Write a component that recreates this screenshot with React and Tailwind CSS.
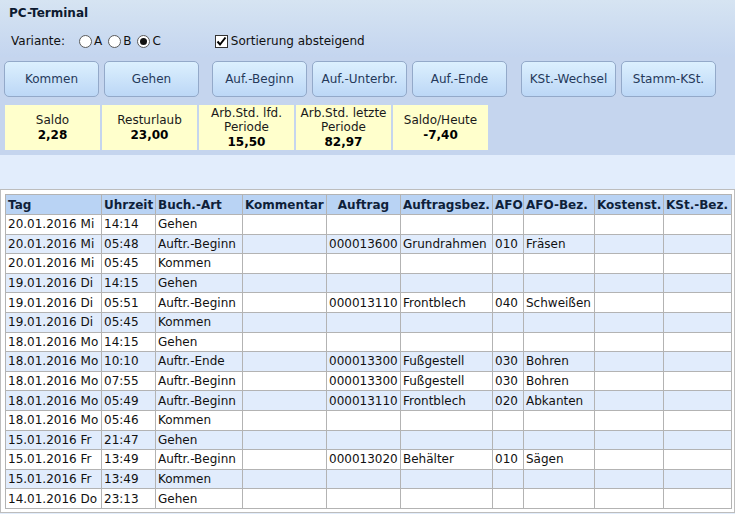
import React, { useState } from "react";

const rows = [
  ["20.01.2016 Mi", "14:14", "Gehen", "", "", "", "", ""],
  ["20.01.2016 Mi", "05:48", "Auftr.-Beginn", "", "000013600", "Grundrahmen", "010", "Fräsen"],
  ["20.01.2016 Mi", "05:45", "Kommen", "", "", "", "", ""],
  ["19.01.2016 Di", "14:15", "Gehen", "", "", "", "", ""],
  ["19.01.2016 Di", "05:51", "Auftr.-Beginn", "", "000013110", "Frontblech", "040", "Schweißen"],
  ["19.01.2016 Di", "05:45", "Kommen", "", "", "", "", ""],
  ["18.01.2016 Mo", "14:15", "Gehen", "", "", "", "", ""],
  ["18.01.2016 Mo", "10:10", "Auftr.-Ende", "", "000013300", "Fußgestell", "030", "Bohren"],
  ["18.01.2016 Mo", "07:55", "Auftr.-Beginn", "", "000013300", "Fußgestell", "030", "Bohren"],
  ["18.01.2016 Mo", "05:49", "Auftr.-Beginn", "", "000013110", "Frontblech", "020", "Abkanten"],
  ["18.01.2016 Mo", "05:46", "Kommen", "", "", "", "", ""],
  ["15.01.2016 Fr", "21:47", "Gehen", "", "", "", "", ""],
  ["15.01.2016 Fr", "13:49", "Auftr.-Beginn", "", "000013020", "Behälter", "010", "Sägen"],
  ["15.01.2016 Fr", "13:49", "Kommen", "", "", "", "", ""],
  ["14.01.2016 Do", "23:13", "Gehen", "", "", "", "", ""],
];

const columns = [
  { label: "Tag", w: "w-[96px]" },
  { label: "Uhrzeit", w: "w-[54px]" },
  { label: "Buch.-Art", w: "w-[87px]" },
  { label: "Kommentar", w: "w-[84px]" },
  { label: "Auftrag", w: "w-[74px]", center: true },
  { label: "Auftragsbez.", w: "w-[92px]" },
  { label: "AFO", w: "w-[31px]" },
  { label: "AFO-Bez.", w: "w-[71px]" },
  { label: "Kostenst.", w: "w-[69px]" },
  { label: "KSt.-Bez.", w: "w-[68px]" },
];

const infos = [
  { label: ["Saldo"], value: "2,28" },
  { label: ["Resturlaub"], value: "23,00" },
  { label: ["Arb.Std. lfd.", "Periode"], value: "15,50" },
  { label: ["Arb.Std. letzte", "Periode"], value: "82,97" },
  { label: ["Saldo/Heute"], value: "-7,40" },
];

const Btn = ({ children, className = "" }) => (
  <button
    className={`w-[95px] h-[36px] rounded-[5px] border border-[#93a9c9] bg-gradient-to-b from-[#dcf0fe] to-[#bcd7f6] text-[12px] text-[#25395a] ${className}`}
  >
    {children}
  </button>
);

const Radio = ({ checked, label, onClick }) => (
  <span className="flex items-center cursor-pointer" onClick={onClick}>
    <span className="w-[13px] h-[13px] rounded-full border border-[#5a5a5a] bg-white flex items-center justify-center">
      {checked && <span className="w-[7px] h-[7px] rounded-full bg-[#111]" />}
    </span>
    <span className="ml-[2px]">{label}</span>
  </span>
);

export default function App() {
  const [variant, setVariant] = useState("C");
  const [desc, setDesc] = useState(true);

  return (
    <div
      className="w-[735px] h-[514px] overflow-hidden bg-[#e2edfc] text-[12px] text-[#111]"
      style={{ fontFamily: '"DejaVu Sans", Verdana, sans-serif' }}
    >
      {/* Header */}
      <div className="h-[57px] bg-gradient-to-b from-[#d6e4f2] to-[#c4d5ef] pl-[9px] pt-[5px]">
        <div className="font-bold text-[#0d1a30] leading-[16px]">PC-Terminal</div>
        <div className="flex items-center mt-[12px] leading-[16px]">
          <span className="ml-[2px] w-[68px]">Variante:</span>
          <div className="flex items-center gap-[6px]">
            <Radio checked={variant === "A"} label="A" onClick={() => setVariant("A")} />
            <Radio checked={variant === "B"} label="B" onClick={() => setVariant("B")} />
            <Radio checked={variant === "C"} label="C" onClick={() => setVariant("C")} />
          </div>
          <span className="flex items-center ml-[54px] cursor-pointer" onClick={() => setDesc(!desc)}>
            <span className="w-[13px] h-[13px] border border-[#333] bg-white flex items-center justify-center">
              {desc && (
                <svg width="11" height="11" viewBox="0 0 11 11">
                  <path d="M1.5 5.5 L4 8.5 L9.5 1.5" fill="none" stroke="#000" strokeWidth="2" />
                </svg>
              )}
            </span>
            <span className="ml-[3px]">Sortierung absteigend</span>
          </span>
        </div>
      </div>

      {/* Buttons and info */}
      <div className="bg-[#c5d5ee] pt-[4px] pb-[5px]">
        <div className="flex pl-[4px]">
          <Btn>Kommen</Btn>
          <Btn className="ml-[5px]">Gehen</Btn>
          <Btn className="ml-[13px]">Auf.-Beginn</Btn>
          <Btn className="ml-[5px]">Auf.-Unterbr.</Btn>
          <Btn className="ml-[5px]">Auf.-Ende</Btn>
          <Btn className="ml-[14px]">KSt.-Wechsel</Btn>
          <Btn className="ml-[5px]">Stamm-KSt.</Btn>
        </div>
        <div className="flex gap-[2px] pl-[5px] mt-[8px]">
          {infos.map((info) => (
            <div
              key={info.value}
              className="w-[95px] h-[45px] bg-[#ffffcc] flex flex-col items-center justify-center text-center leading-[14.5px] text-[#1a1a1a]"
            >
              {info.label.map((l) => (
                <div key={l}>{l}</div>
              ))}
              <div className="font-bold text-[#000]">{info.value}</div>
            </div>
          ))}
        </div>
      </div>

      <div className="h-[34px]" />

      {/* Table */}
      <div className="border border-[#bdbdbd] bg-white pl-[4px] pr-[2px] pt-[4px] pb-[3px]">
        <table className="table-fixed border-collapse border border-[#b8b8b8] w-[727px]">
          <thead>
            <tr className="h-[20px] bg-[#b9d3f4]">
              {columns.map((c) => (
                <th
                  key={c.label}
                  className={`${c.w} border border-[#b3b3b3] px-[2px] py-0 font-bold text-[#0f1f3a] whitespace-nowrap overflow-hidden ${c.center ? "text-center" : "text-left"}`}
                >
                  {c.label}
                </th>
              ))}
            </tr>
          </thead>
          <tbody>
            {rows.map((r, i) => (
              <tr key={i} className={`h-[19.6px] ${i % 2 === 1 ? "bg-[#e1ecfc]" : "bg-white"}`}>
                {r.map((cell, j) => (
                  <td key={j} className="border border-[#b3b3b3] px-[2px] py-0 whitespace-nowrap overflow-hidden">
                    {cell}
                  </td>
                ))}
                <td className="border border-[#b3b3b3]" />
                <td className="border border-[#b3b3b3]" />
              </tr>
            ))}
          </tbody>
        </table>
      </div>
    </div>
  );
}
